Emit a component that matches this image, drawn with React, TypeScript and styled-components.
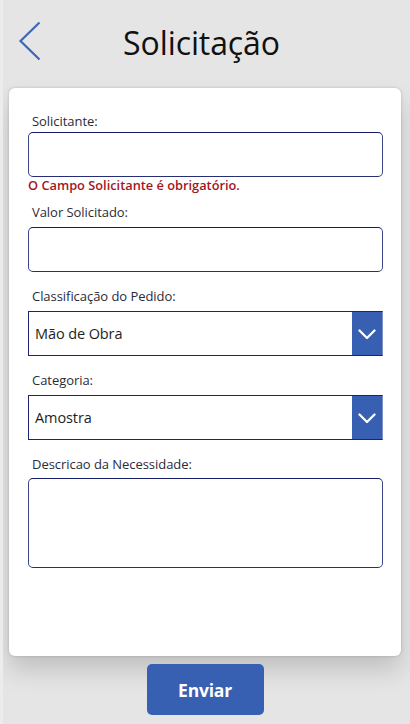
import React from "react";
import styled, { createGlobalStyle } from "styled-components";

const Global = createGlobalStyle`
  html, body { margin: 0; padding: 0; }
  body { background: #e5e5e5; font-family: "Open Sans", "Noto Sans", sans-serif; }
  * { box-sizing: border-box; }
`;

const Page = styled.div`
  width: 410px;
  height: 724px;
  overflow: hidden;
  background: #e5e5e5;
  border-left: 3px solid #ececec;
  display: flex;
  flex-direction: column;
`;

const Header = styled.header`
  height: 88px;
  display: grid;
  grid-template-columns: 40px 1fr 40px;
  align-items: center;
  padding: 0 25px 0 15px;
`;

const BackButton = styled.button`
  width: 40px;
  height: 88px;
  border: 0;
  padding: 0 0 6px 0;
  background: transparent;
  display: flex;
  align-items: center;
  cursor: pointer;
`;

const Title = styled.h1`
  margin: 0 0 4px 0;
  text-align: center;
  font-family: "Open Sans", "Noto Sans", sans-serif;
  font-weight: 400;
  font-size: 32px;
  letter-spacing: -0.1px;
  color: #111;
`;

const Card = styled.main`
  margin: 0 9px 0 6px;
  height: 568px;
  background: #fff;
  border-radius: 6px;
  box-shadow: 0 0 3px rgba(0, 0, 0, 0.18), 0 14px 24px rgba(0, 0, 0, 0.16);
  padding: 25px 18px 0 19px;
  display: flex;
  flex-direction: column;
`;

const Field = styled.div<{ $top: number }>`
  display: flex;
  flex-direction: column;
  margin-top: ${(p) => p.$top}px;
`;

const Label = styled.label<{ $gap: number }>`
  display: block;
  padding-left: 4px;
  font-family: "Open Sans", "Noto Sans", sans-serif;
  font-size: 13px;
  line-height: 16px;
  height: 16px;
  letter-spacing: -0.05px;
  color: #2b2b3a;
  margin-bottom: ${(p) => p.$gap}px;
`;

const TextInput = styled.div<{ $h: number }>`
  height: ${(p) => p.$h}px;
  border: 1px solid #3d4589;
  border-top-color: #141c68;
  border-bottom-color: #262e74;
  border-radius: 5px;
  background: #fff;
`;

const ErrorText = styled.div`
  font-family: "Open Sans", "Noto Sans", sans-serif;
  font-size: 12.8px;
  font-weight: 600;
  line-height: 16px;
  height: 16px;
  letter-spacing: 0;
  color: #a4161a;
`;

const Select = styled.div`
  height: 45px;
  border: 1px solid #1c2470;
  border-right-color: #7f8fc4;
  display: flex;
  align-items: stretch;
  background: #fff;
`;

const SelectValue = styled.span`
  flex: 1;
  display: flex;
  align-items: center;
  padding-left: 6px;
  font-family: "Open Sans", "Noto Sans", sans-serif;
  font-size: 14.5px;
  letter-spacing: -0.1px;
  color: #1e1e1e;
`;

const SelectButton = styled.span`
  width: 30px;
  background: #3860b2;
  display: flex;
  align-items: center;
  justify-content: center;
  padding-top: 1px;
`;

const Footer = styled.footer`
  display: flex;
  justify-content: center;
  padding-top: 8px;
  padding-right: 3px;
`;

const SubmitButton = styled.button`
  width: 117px;
  height: 51px;
  border: 0;
  border-radius: 5px;
  background: #3860b2;
  color: #fff;
  font-family: "Open Sans", "Noto Sans", sans-serif;
  font-weight: 700;
  font-size: 17.5px;
  letter-spacing: -0.2px;
  cursor: pointer;
`;

const Chevron = () => (
  <svg width="18" height="11" viewBox="0 0 18 11" fill="none">
    <polyline
      points="1.5,1.5 9,9 16.5,1.5"
      stroke="#fff"
      strokeWidth="2.3"
      strokeLinecap="round"
      strokeLinejoin="round"
    />
  </svg>
);

const BackIcon = () => (
  <svg width="24" height="40" viewBox="0 0 24 40" fill="none">
    <polyline
      points="21.5,1.5 2.5,20 21.5,38.5"
      stroke="#3e66b8"
      strokeWidth="2.2"
      strokeLinecap="butt"
      strokeLinejoin="miter"
    />
  </svg>
);

const DropdownField = ({ top, label, value }: { top: number; label: string; value: string }) => (
  <Field $top={top}>
    <Label $gap={7}>{label}</Label>
    <Select>
      <SelectValue>{value}</SelectValue>
      <SelectButton>
        <Chevron />
      </SelectButton>
    </Select>
  </Field>
);

export default function App() {
  return (
    <>
      <Global />
      <Page>
        <Header>
          <BackButton aria-label="Voltar">
            <BackIcon />
          </BackButton>
          <Title>Solicitação</Title>
          <span />
        </Header>
        <Card>
          <Field $top={0}>
            <Label $gap={3}>Solicitante:</Label>
            <TextInput $h={45} />
            <ErrorText>O Campo Solicitante é obrigatório.</ErrorText>
          </Field>
          <Field $top={11}>
            <Label $gap={7}>Valor Solicitado:</Label>
            <TextInput $h={45} />
          </Field>
          <DropdownField top={16} label="Classificação do Pedido:" value="Mão de Obra" />
          <DropdownField top={16} label="Categoria:" value="Amostra" />
          <Field $top={16}>
            <Label $gap={6}>Descricao da Necessidade:</Label>
            <TextInput $h={90} />
          </Field>
        </Card>
        <Footer>
          <SubmitButton>Enviar</SubmitButton>
        </Footer>
      </Page>
    </>
  );
}
